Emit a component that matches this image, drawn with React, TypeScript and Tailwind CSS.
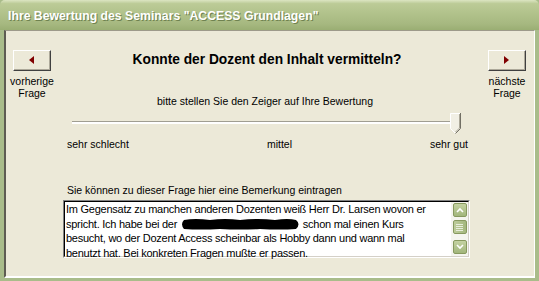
const ui = { fontFamily: '"Liberation Sans", Arial, sans-serif' };

function NavButton({ dir }: { dir: 'left' | 'right' }) {
  return (
    <div className="h-[21px] w-[38px] border-t border-l border-r border-b border-t-white border-l-white border-r-[#404040] border-b-[#404040] bg-[#ece9d8]">
      <div className="flex h-full w-full items-center justify-center border-r border-b border-r-[#aca899] border-b-[#aca899]">
        <svg width="5" height="8" viewBox="0 0 5 8">
          {dir === 'left' ? (
            <path d="M5 0 L0 4 L5 8 Z" fill="#800000" />
          ) : (
            <path d="M0 0 L5 4 L0 8 Z" fill="#800000" />
          )}
        </svg>
      </div>
    </div>
  );
}

function NavColumn({ dir, lines }: { dir: 'left' | 'right'; lines: string[] }) {
  return (
    <div className="flex w-[38px] shrink-0 flex-col items-center">
      <NavButton dir={dir} />
      <div className="mt-[4px] flex flex-col items-center text-[10.5px] leading-[12px] text-black whitespace-nowrap">
        {lines.map((l) => (
          <span key={l}>{l}</span>
        ))}
      </div>
    </div>
  );
}

function SliderThumb() {
  return (
    <svg width="11" height="21" viewBox="0 0 11 21">
      <path d="M0 0 H11 V15.5 L5.5 21 L0 15.5 Z" fill="#f1efe4" />
      <path d="M0.5 15.5 V0.5 H10" stroke="#ffffff" fill="none" />
      <path d="M10.5 0 V15.5 L5.5 20.5" stroke="#716f64" fill="none" />
      <path d="M9.5 1 V15 L5.5 19" stroke="#aca899" fill="none" />
      <path d="M0.5 15.5 L5 20" stroke="#ffffff" fill="none" />
    </svg>
  );
}

function ScrollButton({ up }: { up: boolean }) {
  return (
    <div className="flex h-[14px] w-[14px] items-center justify-center rounded-[2px] border border-[#87995f] bg-[linear-gradient(to_bottom,#c4d2a2,#a2b67c)]">
      <svg width="8" height="6" viewBox="0 0 8 6">
        <path
          d={up ? 'M1 5 L4 2 L7 5' : 'M1 1 L4 4 L7 1'}
          stroke="#ffffff"
          strokeWidth="1.6"
          fill="none"
        />
      </svg>
    </div>
  );
}

function Scrollbar() {
  return (
    <div className="flex w-[17px] shrink-0 flex-col items-center bg-[#f5f5ef]">
      <div className="mt-[1px]">
        <ScrollButton up />
      </div>
      <div className="mt-[3px] flex h-[14px] w-[14px] flex-col items-center justify-center gap-[1px] rounded-[2px] border border-[#87995f] bg-[linear-gradient(to_right,#bdcc9a,#a4b77f)]">
        <span className="h-[1px] w-[7px] bg-[#e8eddc]" />
        <span className="h-[1px] w-[7px] bg-[#e8eddc]" />
        <span className="h-[1px] w-[7px] bg-[#e8eddc]" />
        <span className="h-[1px] w-[7px] bg-[#e8eddc]" />
      </div>
      <div className="mt-[6px]">
        <ScrollButton up={false} />
      </div>
    </div>
  );
}

// geschwärzte Stelle im Freitext
function Redacted() {
  return (
    <svg width="120" height="12" viewBox="0 0 120 12" className="inline-block align-[-2px]">
      <path
        d="M4 2 Q 15 0 30 2 Q 45 0 60 2 Q 78 0 95 2 Q 108 0 116 2 Q 121 6 116 11 Q 100 12 80 11 Q 60 12 40 11 Q 20 12 4 11 Q 0 6 4 2 Z"
        fill="#000"
      />
    </svg>
  );
}

export default function App() {
  return (
    <div className="flex h-[281px] w-[539px] flex-col bg-[#a9bc8a]" style={ui}>
      {/* title bar */}
      <div className="flex h-[30px] shrink-0 items-center rounded-t-[5px] bg-[linear-gradient(to_bottom,#dce5c2_0%,#bccb97_12%,#b1c28b_45%,#a6b880_80%,#9aae73_100%)] pl-[8px] pt-[2px]">
        <span className="text-[12.25px] font-bold text-white [text-shadow:1px_1px_0_#6f8250]">
          Ihre Bewertung des Seminars "ACCESS Grundlagen"
        </span>
      </div>
      {/* body */}
      <div className="flex flex-1 px-[4px] pb-[3px]">
        <div className="flex flex-1 border-t border-l-2 border-r border-b-2 border-t-[#9d9a8a] border-l-[#5e5c52] border-r-white border-b-white bg-[#ece9d8] pl-[7px] pr-[8px] pt-[19px]">
          <NavColumn dir="left" lines={['vorherige', 'Frage']} />
          <div className="flex flex-1 flex-col text-[10.5px] text-black">
            <div className="flex h-[21px] items-center justify-center pr-[5px] text-[13.75px] font-bold">
              Konnte der Dozent den Inhalt vermitteln?
            </div>
            <div className="mt-[24px] h-[13px] pr-[9px] text-center leading-[13px]">
              bitte stellen Sie den Zeiger auf Ihre Bewertung
            </div>
            <div className="relative ml-[21px] mt-[5px] h-[21px] w-[389px]">
              <div className="absolute left-0 right-[2px] top-[8px] h-[3px] border-t border-t-[#a09e92] border-b-2 border-b-white" />
              <div className="absolute right-0 top-0">
                <SliderThumb />
              </div>
            </div>
            <div className="ml-[16px] mt-[4px] flex w-[401px] justify-between leading-[13px]">
              <span>sehr schlecht</span>
              <span>mittel</span>
              <span>sehr gut</span>
            </div>
            <div className="ml-[16px] mt-[33px] leading-[13px]">
              Sie können zu dieser Frage hier eine Bemerkung eintragen
            </div>
            <div className="ml-[12px] mt-[3px] flex h-[58px] w-[407px] border border-t-[#808080] border-l-[#808080] border-r-white border-b-white">
              <div className="flex flex-1 border border-t-[#000000] border-l-[#000000] border-r-[#d4d0c8] border-b-[#d4d0c8] bg-white">
                <div className="flex-1 pl-[1px] text-[11px] leading-[14.7px] tracking-[-0.25px] whitespace-nowrap">
                  <div>Im Gegensatz zu manchen anderen Dozenten weiß Herr Dr. Larsen wovon er</div>
                  <div>
                    spricht. Ich habe bei der <Redacted /> schon mal einen Kurs
                  </div>
                  <div>besucht, wo der Dozent Access scheinbar als Hobby dann und wann mal</div>
                  <div>benutzt hat. Bei konkreten Fragen mußte er passen.</div>
                </div>
                <Scrollbar />
              </div>
            </div>
          </div>
          <NavColumn dir="right" lines={['nächste', 'Frage']} />
        </div>
      </div>
    </div>
  );
}
